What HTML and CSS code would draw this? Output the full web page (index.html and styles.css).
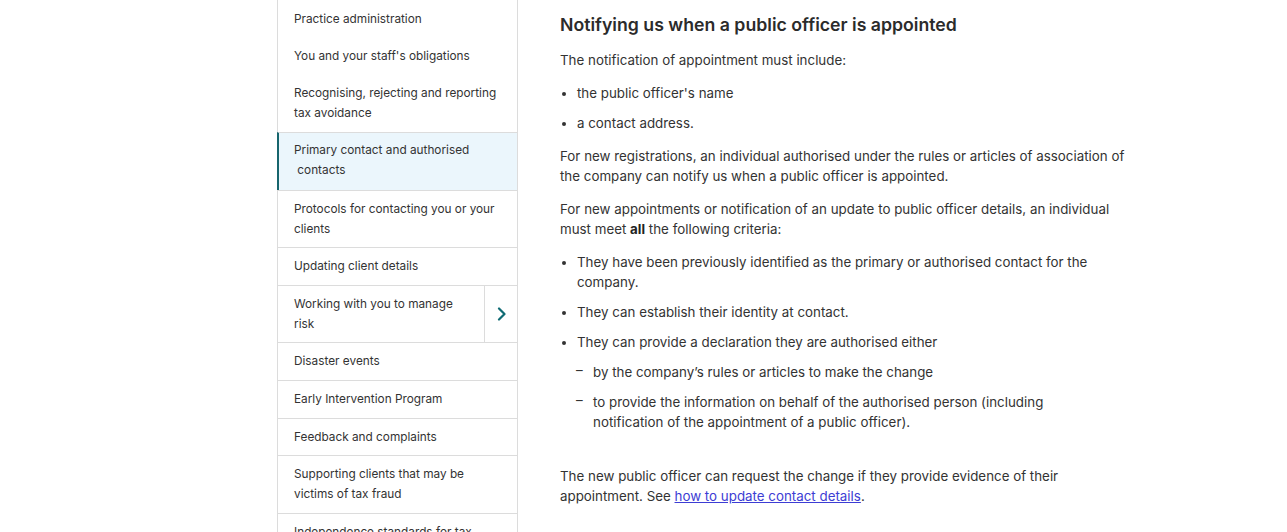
FILE: index.html
```html
<!DOCTYPE html>
<html lang="en">
<head>
<meta charset="utf-8">
<title>Notifying us when a public officer is appointed</title>
<link rel="stylesheet" href="styles.css">
</head>
<body>
<div class="page">
  <nav class="sidenav">
    <ul class="nav-list">
      <li class="nav-item plain"><a href="#">Practice administration</a></li>
      <li class="nav-item plain"><a href="#">You and your staff's obligations</a></li>
      <li class="nav-item plain"><a href="#">Recognising, rejecting and reporting tax avoidance</a></li>
      <li class="nav-item active"><a href="#">Primary contact and authorised<br>&nbsp;contacts</a></li>
      <li class="nav-item"><a href="#">Protocols for contacting you or your clients</a></li>
      <li class="nav-item"><a href="#">Updating client details</a></li>
      <li class="nav-item has-children">
        <a href="#">Working with you to manage risk</a>
        <button class="expand" aria-label="Expand">
          <svg width="10" height="14" viewBox="0 0 10 14"><path d="M2 1.5 L7.5 7 L2 12.5" fill="none" stroke="#0f6b74" stroke-width="2.2" stroke-linecap="round" stroke-linejoin="round"/></svg>
        </button>
      </li>
      <li class="nav-item"><a href="#">Disaster events</a></li>
      <li class="nav-item"><a href="#">Early Intervention Program</a></li>
      <li class="nav-item"><a href="#">Feedback and complaints</a></li>
      <li class="nav-item"><a href="#">Supporting clients that may be victims of tax fraud</a></li>
      <li class="nav-item"><a href="#">Independence standards for tax practitioners</a></li>
    </ul>
  </nav>
  <main class="content">
    <h2 class="title">Notifying us when a public officer is appointed</h2>
    <p>The notification of appointment must include:</p>
    <ul class="bullets">
      <li>the public officer's name</li>
      <li>a contact address.</li>
    </ul>
    <p>For new registrations, an individual authorised under the rules or articles of association of the company can notify us when a public officer is appointed.</p>
    <p>For new appointments or notification of an update to public officer details, an individual must meet <strong>all</strong> the following criteria:</p>
    <ul class="bullets">
      <li>They have been previously identified as the primary or authorised contact for the company.</li>
      <li>They can establish their identity at contact.</li>
      <li>They can provide a declaration they are authorised either
        <ul class="dashes">
          <li>by the company’s rules or articles to make the change</li>
          <li>to provide the information on behalf of the authorised person (including notification of the appointment of a public officer).</li>
        </ul>
      </li>
    </ul>
    <p class="last">The new public officer can request the change if they provide evidence of their appointment. See <a class="link" href="#">how to update contact details</a>.</p>
  </main>
</div>
</body>
</html>
```

FILE: styles.css
```css
* { box-sizing: border-box; }
html, body { margin: 0; padding: 0; background: #fff; }
body {
  font-family: Inter, "Noto Sans", Arial, sans-serif;
  color: #333;
}
.page {
  display: flex;
  align-items: flex-start;
  padding-left: 277px;
}
.sidenav {
  width: 241px;
  flex: none;
  border-left: 1px solid #dcdcdc;
  border-right: 1px solid #dcdcdc;
}
.nav-list {
  list-style: none;
  margin: 1px 0 0;
  padding: 0;
}
.nav-item {
  display: flex;
  border-top: 1px solid #dcdcdc;
  font-size: 11.8px;
  line-height: 20px;
}
.nav-item.plain { border-top: 0; }
.nav-item a {
  flex: 1;
  display: block;
  padding: 8px 16px 8.6px 16px;
  color: #333;
  text-decoration: none;
}
.nav-item.plain a { padding-bottom: 9px; }
.nav-item.active {
  background: #ebf6fc;
  border-left: 2px solid #16656d;
  margin-left: -1px;
}
.nav-item.active a { padding-left: 15px; padding-top: 7px; padding-bottom: 9.6px; }
.has-children a { padding-right: 12px; }
.expand {
  flex: none;
  width: 33px;
  border: 0;
  border-left: 1px solid #dcdcdc;
  background: transparent;
  display: flex;
  align-items: center;
  justify-content: center;
  padding: 0 0 0 2px;
}
.content {
  width: 568px;
  margin-left: 42px;
  font-size: 13.35px;
  line-height: 20px;
  color: #333;
}
.title {
  margin: 14px 0 14px;
  font-size: 17.7px;
  line-height: 22px;
  font-weight: 600;
  color: #2b2b2b;
}
.content p { margin: 0 0 13px; }
.bullets {
  margin: 0 0 13px;
  padding-left: 17px;
}
.bullets > li { margin-bottom: 10px; }
.bullets > li:last-child { margin-bottom: 0; }
.bullets > li::marker { font-size: 12px; }
.dashes {
  list-style: none;
  margin: 10px 0 0;
  padding-left: 16px;
  padding-right: 12px;
}
.dashes li {
  position: relative;
  margin-bottom: 10px;
}
.dashes li:last-child { margin-bottom: 0; }
.dashes li::before {
  content: "–";
  position: absolute;
  left: -17px;
  top: -2px;
}
.content p.last { margin-top: 34px; }
.link { color: #3d3dd4; text-decoration: underline; }
strong { font-weight: 700; color: #222; }
```
